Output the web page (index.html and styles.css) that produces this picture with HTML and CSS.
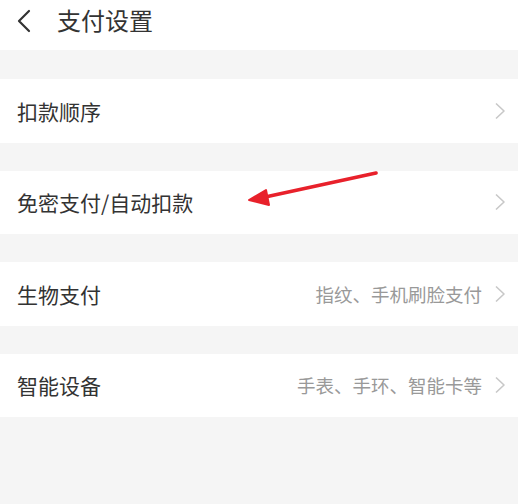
FILE: index.html
```html
<!DOCTYPE html>
<html lang="zh">
<head>
<meta charset="utf-8">
<link rel="stylesheet" href="styles.css">
</head>
<body>
<div class="page">
  <header class="topbar">
    <svg class="back" width="16" height="24" viewBox="0 0 16 24"><path d="M13 2 L3 12 L13 22" fill="none" stroke="#333" stroke-width="2.2" stroke-linecap="round" stroke-linejoin="round"/></svg>
    <span class="title">支付设置</span>
  </header>
  <div class="list">
    <div class="row">
      <span class="label">扣款顺序</span>
      <span class="right"><svg class="chev" width="12" height="18" viewBox="0 0 12 18"><path d="M2 1.5 L10 9 L2 16.5" fill="none" stroke="#c8c8c8" stroke-width="1.6" stroke-linejoin="round"/></svg></span>
    </div>
    <div class="row">
      <span class="label">免密支付/自动扣款</span>
      <span class="right"><svg class="chev" width="12" height="18" viewBox="0 0 12 18"><path d="M2 1.5 L10 9 L2 16.5" fill="none" stroke="#c8c8c8" stroke-width="1.6" stroke-linejoin="round"/></svg></span>
    </div>
    <div class="row">
      <span class="label">生物支付</span>
      <span class="right"><span class="hint">指纹、手机刷脸支付</span><svg class="chev" width="12" height="18" viewBox="0 0 12 18"><path d="M2 1.5 L10 9 L2 16.5" fill="none" stroke="#c8c8c8" stroke-width="1.6" stroke-linejoin="round"/></svg></span>
    </div>
    <div class="row">
      <span class="label">智能设备</span>
      <span class="right"><span class="hint">手表、手环、智能卡等</span><svg class="chev" width="12" height="18" viewBox="0 0 12 18"><path d="M2 1.5 L10 9 L2 16.5" fill="none" stroke="#c8c8c8" stroke-width="1.6" stroke-linejoin="round"/></svg></span>
    </div>
  </div>
  <svg class="arrow" width="518" height="504" viewBox="0 0 518 504">
    <path d="M376 173 L256 199" fill="none" stroke="#e8212b" stroke-width="3.6" stroke-linecap="round"/>
    <path d="M249 200 L266 190 L269 205 Z" fill="#e8212b" stroke="#e8212b" stroke-width="2" stroke-linejoin="round"/>
  </svg>
</div>
</body>
</html>
```
FILE: styles.css
```css
* { box-sizing: border-box; }
html, body { margin: 0; padding: 0; }
body {
  background: #f5f5f5;
  font-family: "Noto Sans CJK SC", "Noto Sans", sans-serif;
  color: #333;
}
.page {
  position: relative;
  width: 518px;
  height: 504px;
  overflow: hidden;
  background: #f5f5f5;
}
.topbar {
  height: 50px;
  background: #fff;
  display: flex;
  align-items: flex-start;
  padding: 7px 0 0 16px;
}
.back { margin-top: 2px; }
.title {
  margin-left: 25px;
  font-size: 24px;
  line-height: 26px;
  color: #333;
}
.list {
  display: flex;
  flex-direction: column;
  gap: 28px;
  padding-top: 29px;
}
.row {
  height: 63.5px;
  background: #fff;
  display: flex;
  align-items: center;
  justify-content: space-between;
  padding: 0 12px 0 17px;
}
.label {
  font-size: 21px;
  color: #333;
}
.right {
  display: flex;
  align-items: center;
  gap: 12px;
}
.hint {
  font-size: 18.5px;
  color: #999;
}
.arrow {
  position: absolute;
  left: 0;
  top: 0;
  pointer-events: none;
}
```
